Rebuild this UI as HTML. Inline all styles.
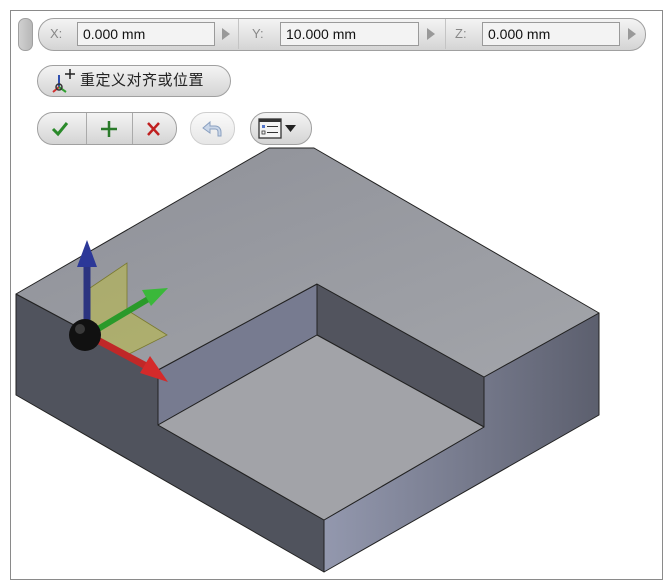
<!DOCTYPE html>
<html><head><meta charset="utf-8"><style>
html,body{margin:0;padding:0;background:#fff;width:667px;height:587px;overflow:hidden;font-family:"Liberation Sans","Noto Sans CJK SC",sans-serif}
.frame{position:absolute;left:10px;top:10px;width:653px;height:570px;border:1.5px solid #8a8a8a;box-sizing:border-box}
.abs{position:absolute}
.pill{background:linear-gradient(#f4f4f4,#d4d4d4);border:1px solid #a0a0a0;box-sizing:border-box}
.fld{position:absolute;top:22px;height:24px;border:1px solid #9a9a9a;background:#f3f3f3;box-sizing:border-box;font-size:14px;line-height:22px;padding-left:5px;color:#111}
.lbl{position:absolute;top:22px;font-size:13px;line-height:24px;color:#888}
.arr{position:absolute;top:28px;width:0;height:0;border-left:8px solid #999;border-top:6px solid transparent;border-bottom:6px solid transparent}
.sep{position:absolute;top:19px;width:1px;height:30px;background:#c4c4c4}
</style></head><body>
<div class="frame"></div>
<div class="abs pill" style="left:18px;top:18px;width:15px;height:33px;border-radius:7px;background:linear-gradient(90deg,#d0d0d0,#b8b8b8)"></div>
<div class="abs pill" style="left:38px;top:18px;width:608px;height:33px;border-radius:16px"></div>
<div class="lbl" style="left:50px">X:</div>
<div class="fld" style="left:77px;width:138px">0.000 mm</div>
<div class="arr" style="left:222px"></div><div class="sep" style="left:238px"></div>
<div class="lbl" style="left:252px">Y:</div>
<div class="fld" style="left:280px;width:139px">10.000 mm</div>
<div class="arr" style="left:427px"></div><div class="sep" style="left:445px"></div>
<div class="lbl" style="left:455px">Z:</div>
<div class="fld" style="left:482px;width:138px">0.000 mm</div>
<div class="arr" style="left:628px"></div>

<div class="abs pill" style="left:37px;top:65px;width:194px;height:32px;border-radius:16px"></div>
<svg class="abs" style="left:50px;top:67px" width="28" height="28" viewBox="0 0 28 28">
<line x1="9" y1="20" x2="9" y2="8" stroke="#3050b0" stroke-width="2"/>
<line x1="9" y1="20" x2="3" y2="25" stroke="#d03030" stroke-width="2"/>
<line x1="9" y1="20" x2="16" y2="25" stroke="#30a030" stroke-width="2"/>
<circle cx="9" cy="20" r="3" fill="none" stroke="#333" stroke-width="1.5"/>
<path d="M20 2v10M15 7h10" stroke="#222" stroke-width="1.5"/>
</svg>
<div class="abs" style="left:80px;top:70px;font-size:15px;line-height:22px;color:#222;letter-spacing:0.5px">重定义对齐或位置</div>

<div class="abs pill" style="left:37px;top:112px;width:140px;height:33px;border-radius:16px"></div>
<div class="abs" style="left:86px;top:113px;width:1px;height:31px;background:#aaa"></div>
<div class="abs" style="left:132px;top:113px;width:1px;height:31px;background:#aaa"></div>
<svg class="abs" style="left:37px;top:112px" width="140" height="33">
<path d="M16 17l5 5 9-11" stroke="#2a8a2a" stroke-width="3" fill="none"/>
<path d="M72 9v16M64 17h16" stroke="#2a7a2a" stroke-width="2.5"/>
<path d="M111 11l11 12M122 11l-11 12" stroke="#c02020" stroke-width="2.5"/>
</svg>
<div class="abs" style="left:190px;top:112px;width:45px;height:33px;border-radius:16px;background:linear-gradient(#fafafa,#e6e6e6);border:1px solid #cfcfcf;box-sizing:border-box"></div>
<svg class="abs" style="left:198px;top:116px" width="28" height="26"><path d="M5 12l7-6v4h5c4 0 6 3 6 6v4h-3v-4c0-2-1-3-3-3h-5v4z" fill="#c9d6e8" stroke="#8aa0c0" stroke-width="1"/></svg>
<div class="abs pill" style="left:250px;top:112px;width:62px;height:33px;border-radius:16px"></div>
<svg class="abs" style="left:258px;top:116px" width="50" height="26">
<rect x="1" y="3" width="22" height="19" fill="#f4f4f4" stroke="#333" stroke-width="1.3"/>
<rect x="1" y="3" width="22" height="3" fill="#333"/>
<rect x="4" y="9" width="3" height="3" fill="#5577cc"/><line x1="9" y1="10.5" x2="20" y2="10.5" stroke="#333"/>
<rect x="4" y="15" width="3" height="3" fill="none" stroke="#333" stroke-width="0.8"/><line x1="9" y1="16.5" x2="20" y2="16.5" stroke="#333"/>
<path d="M27 9h11l-5.5 7z" fill="#222"/>
</svg>

<svg class="abs" style="left:0;top:0" width="667" height="587">
<defs>
<linearGradient id="rf" x1="0" y1="0" x2="1" y2="0"><stop offset="0" stop-color="#9398ae"/><stop offset="1" stop-color="#5c5f6e"/></linearGradient>
<linearGradient id="tp" x1="0" y1="0" x2="1" y2="1"><stop offset="0" stop-color="#8e9098"/><stop offset="1" stop-color="#a3a5aa"/></linearGradient>
</defs>
<g stroke="#222" stroke-width="1" stroke-linejoin="round">
<polygon points="16,294 158,370 158,425 324,520 324,572 16,395" fill="#50535d"/>
<polygon points="484,377 599,313 599,415 324,572 324,520 484,427" fill="url(#rf)"/>
<polygon points="158,370 317,284 317,335 158,425" fill="#777b90"/>
<polygon points="317,284 484,377 484,427 317,335" fill="#52545e"/>
<polygon points="158,425 317,335 484,427 324,520" fill="#a2a3a8"/>
<polygon points="16,294 269,148 314,148 599,313 484,377 317,284 158,370" fill="url(#tp)"/>
</g>
<polygon points="90,288 127,263 127,310 167,335 127,355 90,340" fill="rgba(190,190,70,0.55)" stroke="#7a7a30" stroke-width="0.8"/>
<line x1="87" y1="330" x2="87" y2="264" stroke="#2c3480" stroke-width="7"/>
<polygon points="87,240 77,267 97,267" fill="#2c3898"/>
<line x1="88" y1="335" x2="150" y2="298" stroke="#2a9a2a" stroke-width="6"/>
<polygon points="168,288 142,290 151,306" fill="#3ab83a"/>
<line x1="88" y1="335" x2="148" y2="367" stroke="#c02828" stroke-width="7"/>
<polygon points="168,382 140,373 150,356" fill="#d42a2a"/>
<circle cx="85" cy="335" r="16" fill="#111"/>
<circle cx="80" cy="329" r="5" fill="#555" opacity="0.6"/>
</svg>
</body></html>
